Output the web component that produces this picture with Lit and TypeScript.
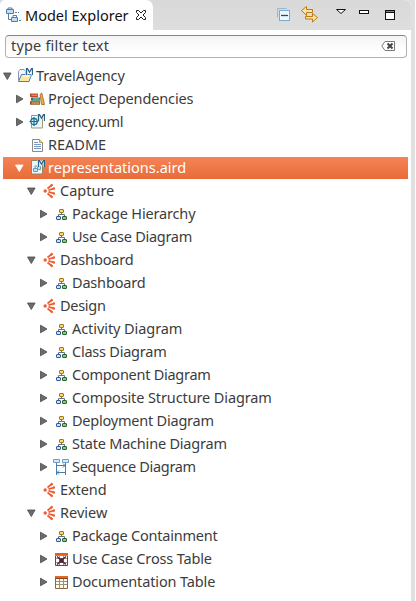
import { LitElement, html, css, svg } from "lit";
import { customElement, property } from "lit/decorators.js";
import { classMap } from "lit/directives/class-map.js";

type Node = { text: string; level: number; icon: string; arrow?: "open" | "closed"; spacing?: number; selected?: boolean };

const rows: Node[] = [
  { text: "TravelAgency", level: 0, icon: "project", arrow: "open", spacing: -0.12 },
  { text: "Project Dependencies", level: 1, icon: "books", arrow: "closed", spacing: -0.12 },
  { text: "agency.uml", level: 1, icon: "uml", arrow: "closed", spacing: -0.28 },
  { text: "README", level: 1, icon: "file" },
  { text: "representations.aird", level: 1, icon: "aird", arrow: "open", selected: true },
  { text: "Capture", level: 2, icon: "view", arrow: "open" },
  { text: "Package Hierarchy", level: 3, icon: "diagram", arrow: "closed", spacing: -0.16 },
  { text: "Use Case Diagram", level: 3, icon: "diagram", arrow: "closed", spacing: -0.28 },
  { text: "Dashboard", level: 2, icon: "view", arrow: "open", spacing: -0.18 },
  { text: "Dashboard", level: 3, icon: "diagram", arrow: "closed", spacing: -0.18 },
  { text: "Design", level: 2, icon: "view", arrow: "open", spacing: -0.28 },
  { text: "Activity Diagram", level: 3, icon: "diagram", arrow: "closed", spacing: -0.07 },
  { text: "Class Diagram", level: 3, icon: "diagram", arrow: "closed", spacing: -0.23 },
  { text: "Component Diagram", level: 3, icon: "diagram", arrow: "closed", spacing: -0.26 },
  { text: "Composite Structure Diagram", level: 3, icon: "diagram", arrow: "closed", spacing: -0.11 },
  { text: "Deployment Diagram", level: 3, icon: "diagram", arrow: "closed", spacing: -0.22 },
  { text: "State Machine Diagram", level: 3, icon: "diagram", arrow: "closed", spacing: -0.21 },
  { text: "Sequence Diagram", level: 3, icon: "sequence", arrow: "closed", spacing: -0.31 },
  { text: "Extend", level: 2, icon: "view", spacing: -0.08 },
  { text: "Review", level: 2, icon: "view", arrow: "open" },
  { text: "Package Containment", level: 3, icon: "diagram", arrow: "closed", spacing: -0.21 },
  { text: "Use Case Cross Table", level: 3, icon: "cross", arrow: "closed", spacing: -0.15 },
  { text: "Documentation Table", level: 3, icon: "table", arrow: "closed", spacing: -0.13 },
];

const modelMark = svg`<path d="M9.500 7V.500h1L12.500 4l2-3.500h1V7" fill="none" stroke="#fff" stroke-opacity=".8" stroke-width="2.600"/><path d="M9.500 7V.700h1L12.500 4.200l2-3.500h1V7" fill="none" stroke="#2c6286" stroke-width="1.300"/>`;

const icons: Record<string, unknown> = {
  project: svg`
    <path d="M1.500 12.500V3.500L3 1.500h4L8.500 3.500V7" fill="#f3f5fa" stroke="#8a93b4"/>
    <path d="M1.500 13.500L4.500 6.500H14.500L12 13.500Z" fill="#fbe7a0" stroke="#4b7cc4"/>
    <path d="M5.500 8h8" stroke="#fffbe0"/>
    ${modelMark}`,
  books: svg`
    <path d="M1 2.500h8v3.500H1z" fill="#c9402b"/><path d="M2.500 4.200h6" stroke="#f0a080"/>
    <path d="M2 6.500h9v3.200H2z" fill="#167b76"/><path d="M4 8h6.500" stroke="#a5d3b9"/>
    <path d="M1 10.200h10v3.500H1z" fill="#8d4f18"/><path d="M2.500 12h8" stroke="#f0c878"/>
    <path d="M11 3.500l1.800-1.500L15.500 13.500H12.500z" fill="#f0b23b" stroke="#9b621d" stroke-width=".8"/>`,
  uml: svg`
    <path d="M2.500 1.500h11v12.500h-11z" fill="#edf5f8" stroke="#9c9b75"/>
    ${modelMark}
    <circle cx="5" cy="7.500" r="3.200" fill="#d9eef4" stroke="#17718f" stroke-width="1.300"/>
    <path d="M5 3v9M.500 7.500h9" stroke="#17718f" stroke-width="1.200"/>`,
  file: svg`
    <path d="M3.500 2.500h7l3 3v9h-10z" fill="#f6f9ff" stroke="#8f8d77"/>
    <path d="M10.500 2.500v3h3" fill="#efd687" stroke="#b59b50"/>
    <path d="M5 5.500h4M5 7.500h7M5 9.500h7M5 11.500h7" stroke="#7e98c5"/>`,
  aird: svg`
    <path d="M2.500 .500h11v13.500h-11z" fill="#eef5f9" stroke="#8c8a63"/>
    <path d="M8.500 6.500h3v3h-3zM4.500 8.500h4v3h-4zM6 8V6h2" fill="#c9e2ef" stroke="#699bb9"/>
    ${modelMark}`,
  view: svg`
    <circle cx="4.200" cy="8" r="1.700" fill="#ee5d33"/>
    <path d="M6.500 5.500L11.500 1.500M7.500 7.100L13.800 5.300M7.500 8.900L13.800 10.700M6.500 10.500L11.500 14.500" fill="none" stroke="#ee5d33" stroke-width="1.700"/>
    <path d="M9.500 3.100l2-1.600M11.300 6l2.500-.7M11.300 10l2.500.7M9.500 12.900l2 1.600" stroke="#ee5d33" stroke-width="2"/>`,
  diagram: svg`
    <path d="M8.500 7v1.500M5.500 10.500V8.500H11.500V10.500" fill="none" stroke="#62718c"/>
    <rect x="6.500" y="3.500" width="4" height="3" rx=".5" fill="#f8dd72" stroke="#a27719"/>
    <rect x="3.500" y="10.500" width="4" height="3" rx=".5" fill="#cfe0f3" stroke="#315b91"/>
    <rect x="9.500" y="10.500" width="4" height="3" rx=".5" fill="#8ecb79" stroke="#23652b"/>`,
  sequence: svg`
    <path d="M.500 .500h6v3h-6zM9.500 .500h6v3h-6z" fill="#d7e8f7" stroke="#6f9dc9"/>
    <path d="M3.500 4v12M12.500 4v12M4 6.500h8M4 13.500h8M10 4.500l2 2-2 2M6 11.500l-2 2 2 2" fill="none" stroke="#477dac"/>`,
  cross: svg`
    <path d="M2.500 2.500h12v12h-12z" fill="#fff" stroke="#654348"/>
    <path d="M2 2h13v2H2z" fill="#e85c17"/>
    <path d="M2 4.500h13M3 7.500h11M3 11.500h11M6.500 5v9M10.500 5v9" stroke="#a08a90"/>
    <path d="M4 5.500L7 8h3l3-2.500M4 13.500L7 11h3l3 2.500" fill="none" stroke="#4b2630" stroke-width="1.300"/><path d="M6.500 8h4v3h-4z" fill="#4b2630"/>`,
  table: svg`
    <path d="M2.500 2.500h12v12h-12z" fill="#fffdf2" stroke="#8b6548"/>
    <path d="M2 2h13v2H2z" fill="#e8651d"/><path d="M2 4.500h13" stroke="#874426"/>
    <path d="M3 7.500h11M3 10.500h11M6.500 5v9M10.500 5v9" stroke="#a18d74"/>`,
};

@customElement("tree-row")
class TreeRow extends LitElement {
  @property({ attribute: false }) node!: Node;
  static styles = css`
    :host { display: block; height: 23px; }
    .row { box-sizing: border-box; height: 22px; margin: 0 3px; display: flex; align-items: center; color: #3c3c3c; }
    .selected { background: linear-gradient(#f58356, #e86c38); color: #fff; }
    .l1 { padding-left: 12px; } .l2 { padding-left: 24px; } .l3 { padding-left: 36px; }
    .arrow { width: 9px; height: 10px; flex: none; fill: #6c6c6c; stroke: #4a4a4a; }
    .selected .arrow { fill: #fff; stroke: #fff; }
    .icon { width: 16px; height: 16px; margin: 0 3px 0 5px; flex: none; }
    .text { white-space: pre; line-height: 20px; padding-bottom: 2px; }
  `;
  render() {
    const n = this.node;
    return html`<div class=${classMap({ row: true, selected: !!n.selected, [`l${n.level}`]: true })}>
      <svg class="arrow" viewBox="0 0 9 10">${n.arrow === "open"
        ? svg`<path d="M.500 2h7.600L4.300 8.500z" stroke-width=".8"/>`
        : n.arrow ? svg`<path d="M1.500 1.200v7.600L8 5z" stroke-width=".8"/>` : ""}</svg>
      <svg class="icon" viewBox="0 0 16 16">${icons[n.icon]}</svg>
      <span class="text" style="letter-spacing:${n.spacing ?? 0}px">${n.text}</span>
    </div>`;
  }
}

@customElement("app-root")
class AppRoot extends LitElement {
  static styles = css`
    :host { display: flex; width: 416px; height: 601px; overflow: hidden; background: #e0e0e0; font: 14.5px "Noto Sans", sans-serif; color: #3c3c3c; }
    .panel { width: 411px; background: #fff; border-radius: 0 7px 0 0; overflow: hidden; }
    .edge { width: 4px; background: #e0e0e0; border-right: 1px solid #fff; }
    .header { height: 30px; display: flex; background: linear-gradient(#d9d9d9, #dedede); }
    .tab { box-sizing: border-box; width: 153px; padding: 0 6px 0 5px; display: flex; align-items: center; background: #fff; border-radius: 5px 7px 0 0; color: #111; }
    .tab .logo { width: 16px; height: 16px; margin-right: 4px; }
    .title { flex: 1; white-space: nowrap; }
    .close { width: 12px; height: 12px; }
    .tools { width: 126px; height: 30px; margin: 0 10px 0 auto; }
    .filter { box-sizing: border-box; height: 23px; margin: 5px 4px 7px 5px; padding: 0 10px 0 5px; display: flex; align-items: center; justify-content: space-between; border: 1px solid #b8afa8; border-top-color: #8e857f; border-radius: 4px; background: linear-gradient(#f4f4f4, #fff 75%); }
    .hint { letter-spacing: .18px; line-height: 19px; padding-bottom: 2px; }
    .clear { width: 15px; height: 11px; }
  `;
  render() {
    return html`<div class="panel">
      <div class="header">
        <div class="tab">
          <svg class="logo" viewBox="0 0 16 16"><path d="M1.500 2.500h7v4h-7zM6.500 10.500h6v4h-6z" fill="#c3def1" stroke="#4f7fac"/><path d="M3 2v-1h4v1M8 10V8.500h3.500V10M3.500 7v5.500H6M10 5.500h2M13 5.500h1M14 13.500h2" fill="none" stroke="#4f7fac"/></svg>
          <span class="title">Model Explorer</span>
          <svg class="close" viewBox="0 0 12 12"><path d="M1.500 1.500h2L6 4l2.500-2.500h2v2L8 6l2.500 2.500v2h-2L6 8l-2.500 2.500h-2v-2L4 6 1.500 3.500z" fill="#fff" stroke="#222"/></svg>
        </div>
        <svg class="tools" viewBox="0 0 126 30">
          <path d="M2.500 17.500v-9h9" fill="none" stroke="#91b9d8"/><rect x="4.500" y="10.500" width="10" height="10" fill="#eef8ff" stroke="#7daacd"/><path d="M6 15.500h7" stroke="#164e8b" stroke-width="1.300"/>
          <path d="M26.500 10.500l5-4v3h6v3h-6v3zM42.500 17.500l-5-4v3h-7v2.500h7v3z" fill="#fae5a2" stroke="#bf7b10"/>
          <path d="M61.500 9.500h9l-4.500 4z" fill="#fff" stroke="#111"/><rect x="84.500" y="10.500" width="9" height="3" fill="#fff" stroke="#111"/>
          <rect x="110.500" y="10.500" width="9" height="9" fill="#fff" stroke="#111"/><path d="M110 11h10M110 12.500h10" stroke="#111"/>
        </svg>
      </div>
      <div class="filter"><span class="hint">type filter text</span><svg class="clear" viewBox="0 0 15 11"><path d="M4 .500h9.500v9H4L.800 5z" fill="#fff" stroke="#777"/><path d="M6.500 2.500l5 5M11.500 2.500l-5 5" stroke="#444" stroke-width="2"/></svg></div>
      <div>${rows.map((n) => html`<tree-row .node=${n}></tree-row>`)}</div>
    </div><div class="edge"></div>`;
  }
}
